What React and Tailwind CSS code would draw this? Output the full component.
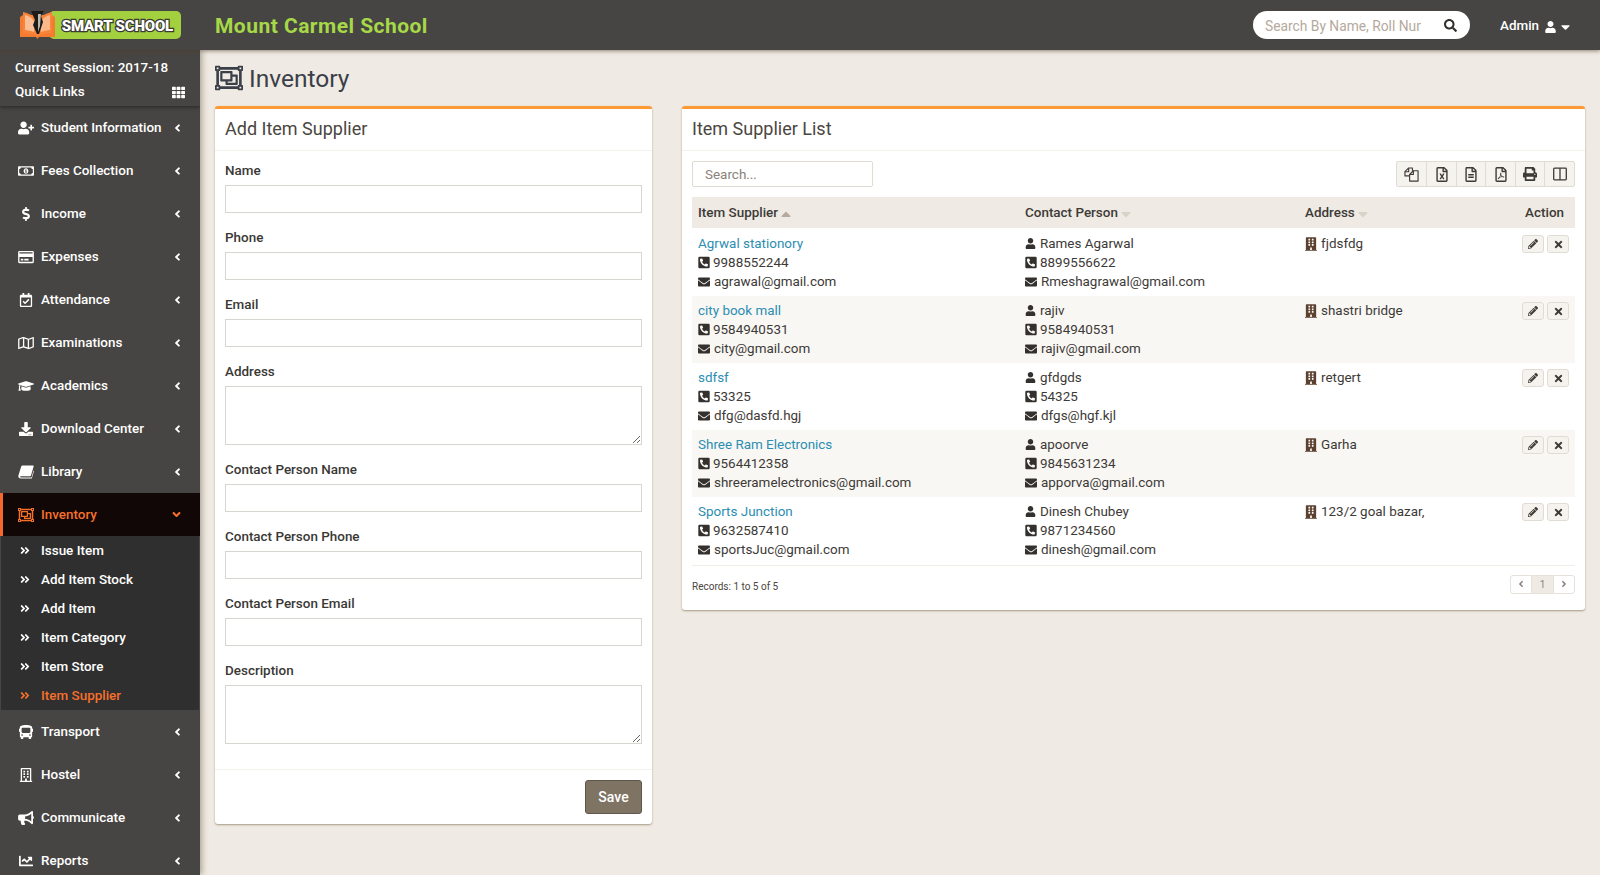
import React from 'react';
import {
  FaUserPlus, FaRegMoneyBillAlt, FaDollarSign, FaRegCreditCard, FaRegCalendarCheck, FaRegMap,
  FaGraduationCap, FaDownload, FaBus, FaRegBuilding, FaBullhorn, FaChartLine, FaPhoneSquareAlt,
  FaEnvelope, FaUser, FaPencilAlt, FaTimes, FaAngleLeft, FaAngleRight, FaAngleDown, FaAngleDoubleRight,
  FaTh, FaSearch, FaCaretDown, FaRegObjectGroup, FaBuilding, FaRegFileExcel, FaRegFileAlt,
  FaRegFilePdf, FaPrint, FaSortUp, FaSortDown,
} from 'react-icons/fa';

// FA4 style book, leaning to the right
const BookIcon = ({ className }) => (
  <svg viewBox="0 0 16 14" className={className} fill="currentColor">
    <path d="M4.500 0.500 H15 C15.600 0.500 15.800 1 15.600 1.600 L13 10.500 C12.800 11 12.500 11.200 12 11.200 H3 C2.200 11.200 2 11.800 2.400 12.200 C2.700 12.500 3 12.500 3.500 12.500 H13.500 L15.500 5.500 L16 6 L13.800 13.500 H3 C1.200 13.500 0 12.200 0.400 10.500 L3.200 1.600 C3.400 0.900 3.900 0.500 4.500 0.500 Z" />
  </svg>
);

// fa-files-o has no match in the package
const FilesIcon = ({ className }) => (
  <svg viewBox="0 0 16 16" className={className} fill="none" stroke="currentColor" strokeWidth="1.200" strokeLinejoin="round">
    <path d="M6 9.500 H1 V5 L5 1 H9 V4" />
    <path d="M1 5 H5 V1" />
    <path d="M6 15 V8 L10 4 H15 V15 Z" />
    <path d="M6 8 H10 V4" />
  </svg>
);

const ColumnsIcon = ({ className }) => (
  <svg viewBox="0 0 14 14" className={className} fill="none" stroke="currentColor" strokeWidth="1.300">
    <rect x="0.700" y="1.200" width="12.600" height="11.600" rx="0.800" />
    <path d="M7 1 V13" />
  </svg>
);

const menuTop = [
  ['Student Information', FaUserPlus],
  ['Fees Collection', FaRegMoneyBillAlt],
  ['Income', FaDollarSign],
  ['Expenses', FaRegCreditCard],
  ['Attendance', FaRegCalendarCheck],
  ['Examinations', FaRegMap],
  ['Academics', FaGraduationCap],
  ['Download Center', FaDownload],
  ['Library', BookIcon],
];
const subItems = ['Issue Item', 'Add Item Stock', 'Add Item', 'Item Category', 'Item Store', 'Item Supplier'];
const menuBottom = [
  ['Transport', FaBus],
  ['Hostel', FaRegBuilding],
  ['Communicate', FaBullhorn],
  ['Reports', FaChartLine],
];

const suppliers = [
  ['Agrwal stationory', '9988552244', 'agrawal@gmail.com', 'Rames Agarwal', '8899556622', 'Rmeshagrawal@gmail.com', 'fjdsfdg'],
  ['city book mall', '9584940531', 'city@gmail.com', 'rajiv', '9584940531', 'rajiv@gmail.com', 'shastri bridge'],
  ['sdfsf', '53325', 'dfg@dasfd.hgj', 'gfdgds', '54325', 'dfgs@hgf.kjl', 'retgert'],
  ['Shree Ram Electronics', '9564412358', 'shreeramelectronics@gmail.com', 'apoorve', '9845631234', 'apporva@gmail.com', 'Garha'],
  ['Sports Junction', '9632587410', 'sportsJuc@gmail.com', 'Dinesh Chubey', '9871234560', 'dinesh@gmail.com', '123/2 goal bazar,'],
];

const Logo = () => (
  <div className="w-[162px] h-[28px] relative">
    <div className="absolute left-[30px] top-0 w-[132px] h-[28px] rounded-[5px] bg-[#a3d03f] flex items-center justify-end pr-[8px] pt-[2px]">
      <span className="font-['Roboto',sans-serif] font-black text-[15px] text-white [-webkit-text-stroke:2.500px_#3a3a34] [paint-order:stroke_fill] tracking-[-0.2px]">
        SMART SCHOOL
      </span>
    </div>
    <svg width="37" height="28" viewBox="0 0 37 28" className="absolute left-0 top-0">
      <path d="M4 4 L1 6 L1 26 L17 26 L18.500 28 L20 26 L36 26 L36 6 L33 4 Z" fill="#f47b2f" />
      <path d="M4 1 C10 2 15 5 18.500 10 C22 5 27 2 33 1 L33 22 C27 22 22 23 18.500 26 C15 23 10 22 4 22 Z" fill="#f7843a" />
      <path d="M6 4 C10 5 13 7 15 10 L15 21 C12 20 9 19 6 19 Z" fill="#fbd9bd" opacity="0.7" />
      <path d="M31 4 C27 5 24 7 22 10 L22 21 C25 20 28 19 31 19 Z" fill="#fbd9bd" opacity="0.6" />
      <path d="M12 0 L25 0 L22 5 L24 11 L20 23 L18 23 L14 14 L16 9 Z" fill="#1d1b1a" />
      <path d="M19 3 L22 3 L21 15 L19 21 Z" fill="#b9b9b0" />
    </svg>
  </div>
);

const MenuRow = ({ label, Icon }) => (
  <div className="h-[43px] flex items-center pl-[18px] pr-[18px] text-white">
    <Icon className="w-[16px] h-[14px] shrink-0" />
    <span className="ml-[7px] pt-[2px] flex-1 text-[13.440px] font-medium">{label}</span>
    <FaAngleLeft className="w-[9px] h-[12px]" />
  </div>
);

const Sidebar = () => (
  <aside className="w-[200px] shrink-0 bg-[#474543] shadow-[2px_0_6px_rgba(90,70,50,0.45)] z-10 overflow-hidden">
    <div className="h-[56px] pt-[8px] pl-[15px] pr-[15px] text-white text-[13.440px] font-medium shadow-[0_1px_4px_rgba(0,0,0,0.45)]">
      <div className="h-[20px] leading-[20px]">Current Session: 2017-18</div>
      <div className="h-[24px] mt-[2px] flex items-center justify-between">
        <span>Quick Links</span>
        <FaTh className="w-[13px] h-[13px]" />
      </div>
    </div>
    {menuTop.map(([label, Icon]) => (
      <MenuRow key={label} label={label} Icon={Icon} />
    ))}
    <div className="h-[43px] flex items-center pl-[15px] pr-[18px] bg-[#100706] border-l-[3px] border-[#f4692b] text-[#f6702c]">
      <FaRegObjectGroup className="w-[16px] h-[16px] shrink-0" />
      <span className="ml-[7px] pt-[2px] flex-1 text-[13.440px] font-medium">Inventory</span>
      <FaAngleDown className="w-[11px] h-[13px]" />
    </div>
    <div className="bg-[#2f2f2f] mx-px">
      {subItems.map((item, i) => (
        <div
          key={item}
          className={`h-[29px] flex items-center pl-[19px] text-[13.440px] font-medium ${i === 5 ? 'text-[#f6702c]' : 'text-white'}`}
        >
          <FaAngleDoubleRight className="w-[10px] h-[11px]" />
          <span className="ml-[11px] pt-[2px]">{item}</span>
        </div>
      ))}
    </div>
    {menuBottom.map(([label, Icon]) => (
      <MenuRow key={label} label={label} Icon={Icon} />
    ))}
  </aside>
);

const Field = ({ label, area, className }) => (
  <div className={className}>
    <div className="h-[20px] pt-px leading-[20px] text-[13.440px] font-medium text-[#3a3835]">{label}</div>
    {area ? (
      <textarea className="block mt-[5px] w-full h-[59px] bg-white border border-[#d8d5d0] resize-y" />
    ) : (
      <input className="block mt-[5px] w-full h-[28px] bg-white border border-[#d8d5d0]" />
    )}
  </div>
);

const AddForm = () => (
  <section className="w-[437px] h-[718px] shrink-0 bg-white border-t-[3px] border-[#fd9a36] rounded-[3px] shadow-[0_1px_2px_rgba(110,90,60,0.55)] flex flex-col">
    <h3 className="h-[42px] leading-[40px] pl-[10px] text-[18px] text-[#4a4640] border-b border-[#f4f1ec]">Add Item Supplier</h3>
    <div className="h-[618px] pt-[9px] px-[10px]">
      <Field label="Name" />
      <Field label="Phone" className="mt-[14px]" />
      <Field label="Email" className="mt-[14px]" />
      <Field label="Address" area className="mt-[14px]" />
      <Field label="Contact Person Name" className="mt-[14px]" />
      <Field label="Contact Person Phone" className="mt-[14px]" />
      <Field label="Contact Person Email" className="mt-[14px]" />
      <Field label="Description" area className="mt-[14px]" />
    </div>
    <div className="flex-1 border-t border-[#f4f1ec] flex justify-end items-start pt-[10px] pr-[10px]">
      <button className="w-[57px] h-[34px] bg-[#7f7464] border border-[#5f574c] rounded-[3px] text-white text-[14px] font-medium">Save</button>
    </div>
  </section>
);

const ToolButton = ({ Icon, size }) => (
  <div className="w-[29.800px] h-full flex items-center justify-center border-l first:border-l-0 border-[#e0dcd4] text-[#3f3a36]">
    <Icon className={size} />
  </div>
);

const Line = ({ Icon, size, children, link }) => (
  <div className={`h-[19px] leading-[19px] flex items-center whitespace-nowrap ${link ? 'text-[#2c8eb1]' : ''}`}>
    {Icon && <Icon className={`${size} shrink-0 text-[#33302d]`} />}
    {children}
  </div>
);

const SortHead = ({ label, Icon, dark, className }) => (
  <div className={`flex items-center ${className}`}>
    {label}
    <Icon className={`w-[10px] h-[16px] ml-[3px] ${Icon === FaSortUp ? 'mt-[9px]' : 'mb-[5px]'} ${dark ? 'text-[#b5ab9d]' : 'text-[#d8d2c8]'}`} />
  </div>
);

const phoneSize = 'w-[12px] h-[13px] mr-[3px]';
const mailSize = 'w-[12px] h-[12px] mr-[4px]';

const SupplierRow = ({ row, odd, first }) => (
  <div className={`flex pl-[6px] pr-[6px] text-[13.440px] text-[#3d3a37] ${first ? 'h-[68px] pt-[6px]' : 'h-[67px] pt-[5px]'} ${odd ? 'bg-[#f9f7f4]' : 'bg-white'}`}>
    <div className="w-[327px]">
      <Line link>{row[0]}</Line>
      <Line Icon={FaPhoneSquareAlt} size={phoneSize}>{row[1]}</Line>
      <Line Icon={FaEnvelope} size={mailSize}>{row[2]}</Line>
    </div>
    <div className="w-[280px]">
      <Line Icon={FaUser} size="w-[11px] h-[11px] mr-[4px]">{row[3]}</Line>
      <Line Icon={FaPhoneSquareAlt} size={phoneSize}>{row[4]}</Line>
      <Line Icon={FaEnvelope} size={mailSize}>{row[5]}</Line>
    </div>
    <div className="flex-1">
      <Line Icon={FaBuilding} size="w-[12px] h-[14px] mr-[4px] !text-[#5c4030]">{row[6]}</Line>
    </div>
    <div className="flex gap-[3px]">
      <span className="w-[22px] h-[18px] mt-[1px] flex items-center justify-center bg-[#f5f3ee] border border-[#e0dcd4] rounded-[3px] text-[#3f3a36]">
        <FaPencilAlt className="w-[10px] h-[10px]" />
      </span>
      <span className="w-[22px] h-[18px] mt-[1px] flex items-center justify-center bg-[#f5f3ee] border border-[#e0dcd4] rounded-[3px] text-[#3f3a36]">
        <FaTimes className="w-[11px] h-[11px]" />
      </span>
    </div>
  </div>
);

const SupplierList = () => (
  <section className="w-[903px] h-[504px] shrink-0 bg-white border-t-[3px] border-[#fd9a36] rounded-[3px] shadow-[0_1px_2px_rgba(110,90,60,0.55)]">
    <h3 className="h-[42px] leading-[40px] pl-[10px] text-[18px] text-[#4a4640] border-b border-[#f4f1ec]">Item Supplier List</h3>
    <div className="px-[10px]">
      <div className="flex justify-between mt-[10px] h-[26px]">
        <input
          placeholder="Search..."
          className="w-[181px] h-[26px] pl-[12px] text-[13.440px] border border-[#e0dcd4] rounded-[2px] placeholder:text-[#8a8379]"
        />
        <div className="flex w-[179px] h-[26px] bg-[#f5f3ee] border border-[#e0dcd4] rounded-[2px]">
          <ToolButton Icon={FilesIcon} size="w-[15px] h-[15px]" />
          <ToolButton Icon={FaRegFileExcel} size="w-[14px] h-[15px]" />
          <ToolButton Icon={FaRegFileAlt} size="w-[14px] h-[15px]" />
          <ToolButton Icon={FaRegFilePdf} size="w-[14px] h-[15px]" />
          <ToolButton Icon={FaPrint} size="w-[14px] h-[14px]" />
          <ToolButton Icon={ColumnsIcon} size="w-[14px] h-[14px]" />
        </div>
      </div>
      <div className="mt-[10px] pb-px border-b border-[#f1eee8]">
        <div className="h-[31px] pt-[2px] flex items-center pl-[6px] pr-[11px] bg-[#efeae3] text-[13.440px] font-medium text-[#3d3a37]">
          <SortHead label="Item Supplier" Icon={FaSortUp} dark className="w-[327px]" />
          <SortHead label="Contact Person" Icon={FaSortDown} className="w-[280px]" />
          <SortHead label="Address" Icon={FaSortDown} className="flex-1" />
          <span>Action</span>
        </div>
        {suppliers.map((row, i) => (
          <SupplierRow key={row[0]} row={row} odd={i % 2 === 1} first={i === 0} />
        ))}
      </div>
      <div className="flex items-center justify-between mt-[8px]">
        <span className="mt-[5px] text-[10px] text-[#4a4640]">Records: 1 to 5 of 5</span>
        <div className="flex w-[65px] h-[19px] text-[10px] text-[#8a8379]">
          <span className="flex-1 flex items-center justify-center border border-[#e6e1d9] rounded-l-[3px]"><FaAngleLeft className="w-[8px] h-[10px]" /></span>
          <span className="flex-1 flex items-center justify-center bg-[#efeae3] border-y border-[#e6e1d9]">1</span>
          <span className="flex-1 flex items-center justify-center border border-[#e6e1d9] rounded-r-[3px]"><FaAngleRight className="w-[8px] h-[10px]" /></span>
        </div>
      </div>
    </div>
  </section>
);

export default function App() {
  return (
    <div className="h-screen overflow-hidden flex flex-col bg-[#efeae3] font-['Roboto',sans-serif]">
      <header className="h-[50px] shrink-0 bg-[#474543] flex items-center shadow-[0_1px_4px_rgba(80,60,40,0.6)] z-20">
        <div className="w-[215px] pl-[19px]">
          <Logo />
        </div>
        <h1 className="flex-1 mt-[3px] text-[21px] font-bold tracking-[0.470px] text-[#a6d848]">Mount Carmel School</h1>
        <div className="w-[217px] h-[28px] rounded-full bg-white flex items-center pl-[12px] pr-[13px]">
          <input placeholder="Search By Name, Roll Number" className="w-[156px] mt-[2px] text-[13.800px] outline-none placeholder:text-[#b5a99c]" />
          <FaSearch className="ml-auto w-[13px] h-[13px] text-[#33302d]" />
        </div>
        <div className="w-[130px] pt-[3px] flex items-center pl-[30px] text-white text-[13.440px] font-medium">
          Admin
          <FaUser className="ml-[6px] w-[11px] h-[12px]" />
          <FaCaretDown className="ml-[5px] w-[9px] h-[14px]" />
        </div>
      </header>
      <div className="flex flex-1 min-h-0">
        <Sidebar />
        <main className="flex-1 pl-[15px]">
          <div className="h-[56px] flex items-center">
            <FaRegObjectGroup className="w-[28px] h-[28px] text-[#3b3f48]" />
            <span className="ml-[6px] mt-[2px] text-[24.500px] text-[#3b3f48]">Inventory</span>
          </div>
          <div className="flex gap-[30px] items-start">
            <AddForm />
            <SupplierList />
          </div>
        </main>
      </div>
    </div>
  );
}
